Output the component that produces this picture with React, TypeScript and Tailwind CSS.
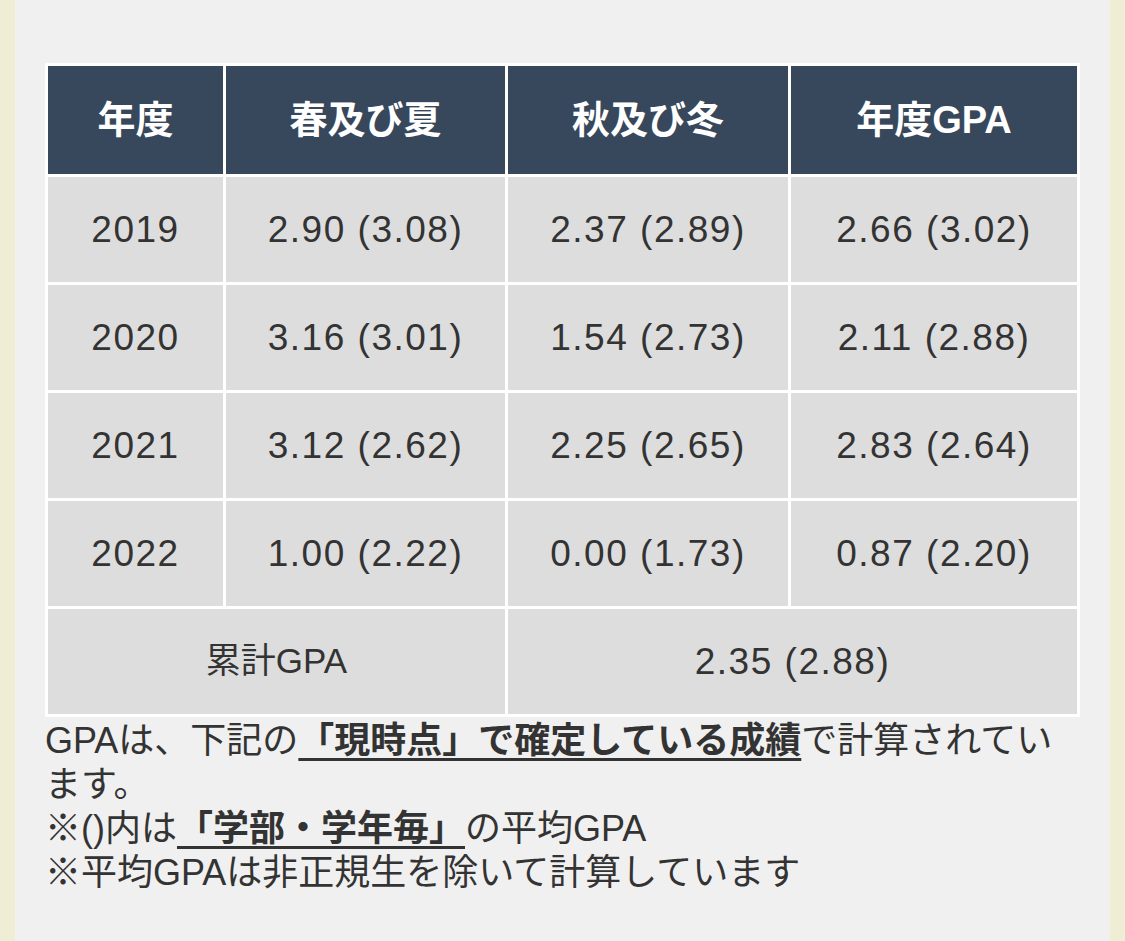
import React from "react";

const rows = [
  ["2019", "2.90 (3.08)", "2.37 (2.89)", "2.66 (3.02)"],
  ["2020", "3.16 (3.01)", "1.54 (2.73)", "2.11 (2.88)"],
  ["2021", "3.12 (2.62)", "2.25 (2.65)", "2.83 (2.64)"],
  ["2022", "1.00 (2.22)", "0.00 (1.73)", "0.87 (2.20)"],
];

const headers = ["年度", "春及び夏", "秋及び冬", "年度GPA"];

export default function App() {
  return (
    <div className="flex h-[941px] w-[1125px] overflow-hidden font-['Liberation_Sans','Noto_Sans_CJK_JP',sans-serif] text-[#333333]">
      <div className="w-[15px] shrink-0 bg-[#efedd3]" />
      <div className="flex-1 bg-[#f0f0f0] pl-[30px] pt-[63px]">
        <div className="grid w-[1035px] grid-cols-[175px_279px_280px_286px] gap-[3px] bg-white p-[3px]">
          {headers.map((h) => (
            <div
              key={h}
              className="flex h-[108px] items-center justify-center bg-[#37485c] text-[38px] font-bold text-white"
            >
              {h}
            </div>
          ))}
          {rows.map((r) =>
            r.map((c, i) => (
              <div
                key={r[0] + i}
                className="flex h-[105px] items-center justify-center bg-[#dddddd] text-[37px] tracking-[1.5px]"
              >
                {c}
              </div>
            ))
          )}
          <div className="col-span-2 flex h-[105px] items-center justify-center bg-[#dddddd] text-[35px]">
            累計GPA
          </div>
          <div className="col-span-2 flex h-[105px] items-center justify-center bg-[#dddddd] text-[37px] tracking-[1.5px]">
            2.35 (2.88)
          </div>
        </div>
        <div className="w-[1035px] pt-[2px] text-[36px] leading-[44px]">
          <p>
            GPAは、下記の
            <span className="font-bold underline decoration-[3px] underline-offset-[5px]">
              「現時点」で確定している成績
            </span>
            で計算されています。
          </p>
          <p>
            ※()内は
            <span className="font-bold underline decoration-[3px] underline-offset-[5px]">
              「学部・学年毎」
            </span>
            の平均GPA
          </p>
          <p>※平均GPAは非正規生を除いて計算しています</p>
        </div>
      </div>
      <div className="w-[15px] shrink-0 bg-[#efedd3]" />
    </div>
  );
}
